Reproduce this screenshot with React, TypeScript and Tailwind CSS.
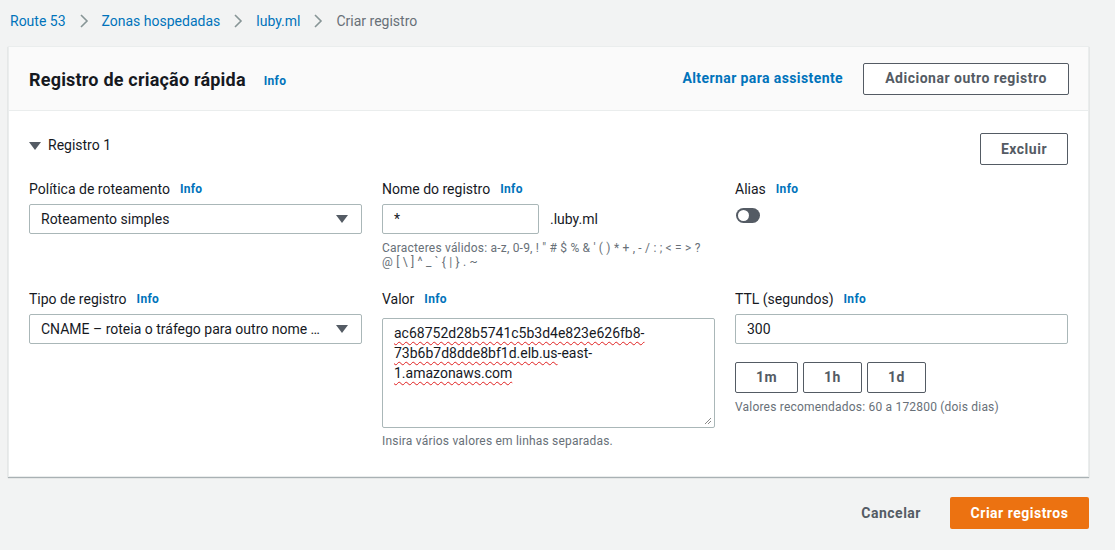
import React from 'react';

const Info = () => (
  <span className="ml-[10px] text-[12px] font-bold tracking-[0.3px] text-[#0073bb]">Info</span>
);

const Caret = () => (
  <svg width="12" height="8" viewBox="0 0 12 8" className="shrink-0">
    <path d="M0 0h12L6 8z" fill="#545b64" />
  </svg>
);

const Chevron = () => (
  <svg width="10" height="14" viewBox="0 0 10 14" className="mx-[13px]">
    <path d="M2 1l6 6-6 6" fill="none" stroke="#879596" strokeWidth="1.6" />
  </svg>
);

const Label = ({ text }: { text: string }) => (
  <div className="flex h-[20px] items-center text-[14px] text-[#16191f]">
    {text}
    <Info />
  </div>
);

const btn = 'rounded-[2px] border border-[#545b64] bg-white text-[14px] font-bold tracking-[0.5px] text-[#545b64]';

const App: React.FC = () => {
  return (
    <div className="min-h-[550px] bg-[#f2f3f3] text-[#16191f]" style={{ fontFamily: 'Roboto, "Noto Sans", sans-serif' }}>
      {/* Breadcrumb */}
      <div className="flex h-[42px] items-center pl-[10px] text-[14px]">
        <span className="text-[#0073bb]">Route 53</span>
        <Chevron />
        <span className="text-[#0073bb]">Zonas hospedadas</span>
        <Chevron />
        <span className="text-[#0073bb]">luby.ml</span>
        <Chevron />
        <span className="text-[#687078]">Criar registro</span>
      </div>

      {/* Card */}
      <div className="ml-[8px] mr-[26px] mt-[4px] border border-[#eaeded] bg-white shadow-[0_1px_1px_0_rgba(0,28,36,0.3)]">
        <div className="flex h-[64px] items-center justify-between border-b border-[#eaeded] bg-[#fafafa] pl-[20px] pr-[19px]">
          <div className="flex items-center pt-[1px]">
            <h1 className="text-[18px] font-bold tracking-[0.2px]">Registro de criação rápida</h1>
            <span className="ml-[18px] mt-[3px] text-[12px] font-bold tracking-[0.3px] text-[#0073bb]">Info</span>
          </div>
          <div className="flex items-center">
            <span className="mr-[20px] text-[14px] font-bold tracking-[0.4px] text-[#0073bb]">Alternar para assistente</span>
            <button className={`h-[32px] w-[206px] ${btn}`}>Adicionar outro registro</button>
          </div>
        </div>

        <div className="px-[20px] pb-[26px] pt-[22px]">
          <div className="flex items-start justify-between">
            <div className="mt-[2px] flex items-center text-[14px]">
              <Caret />
              <span className="ml-[7px]">Registro 1</span>
            </div>
            <button className={`h-[32px] w-[88px] ${btn}`}>Excluir</button>
          </div>

          <div className="mt-[14px] grid grid-cols-3 gap-x-[20px]">
            {/* Row 1 */}
            <div>
              <Label text="Política de roteamento" />
              <div className="mt-[5px] flex h-[30px] items-center justify-between rounded-[2px] border border-[#aab7b8] pl-[11px] pr-[13px] text-[14px]">
                <span>Roteamento simples</span>
                <Caret />
              </div>
            </div>
            <div>
              <Label text="Nome do registro" />
              <div className="mt-[5px] flex items-center">
                <div className="flex h-[30px] w-[157px] items-center rounded-[2px] border border-[#aab7b8] pl-[11px] text-[14px]">*</div>
                <span className="ml-[11px] text-[14px]">.luby.ml</span>
              </div>
              <p className="mt-[7px] text-[12px] leading-[14px] tracking-[0.2px] text-[#687078]">
                Caracteres válidos: a-z, 0-9, ! " # $ % &amp; ' ( ) * + , - / : ; &lt; = &gt; ?
                <br />@ [ \ ] ^ _ ` {'{'} | {'}'} . ~
              </p>
            </div>
            <div>
              <div className="flex h-[20px] items-center text-[14px]">
                Alias
                <Info />
              </div>
              <div className="ml-[1px] mt-[9px] flex h-[15px] w-[24px] items-center rounded-full bg-[#545b64] pl-[2px]">
                <div className="h-[11px] w-[11px] rounded-full bg-white" />
              </div>
            </div>

            {/* Row 2 */}
            <div className="mt-[20px]">
              <Label text="Tipo de registro" />
              <div className="mt-[5px] flex h-[30px] items-center justify-between rounded-[2px] border border-[#aab7b8] pl-[11px] pr-[13px] text-[14px]">
                <span className="truncate pr-[10px]">CNAME – roteia o tráfego para outro nome de domínio</span>
                <Caret />
              </div>
            </div>
            <div className="mt-[20px]">
              <Label text="Valor" />
              <div className="relative mt-[9px] h-[110px] rounded-[2px] border border-[#aab7b8] px-[11px] pt-[4px] text-[14px] leading-[20px]">
                <div className="underline decoration-wavy decoration-[#e02020] decoration-1 underline-offset-[3px]">
                  ac68752d28b5741c5b3d4e823e626fb8-
                </div>
                <div>
                  <span className="underline decoration-wavy decoration-[#e02020] decoration-1 underline-offset-[3px]">73b6b7d8dde8bf1d.elb.us</span>-east-
                </div>
                <div className="underline decoration-wavy decoration-[#e02020] decoration-1 underline-offset-[3px]">1.amazonaws.com</div>
                <svg width="8" height="8" viewBox="0 0 8 8" className="absolute bottom-[2px] right-[2px]">
                  <path d="M7 1L1 7M7 4L4 7" stroke="#888" strokeWidth="1" />
                </svg>
              </div>
              <p className="mt-[4px] text-[12px] tracking-[0.2px] text-[#687078]">Insira vários valores em linhas separadas.</p>
            </div>
            <div className="mt-[20px]">
              <div className="flex h-[20px] items-center text-[14px]">
                TTL (segundos)
                <Info />
              </div>
              <div className="mt-[5px] flex h-[30px] items-center rounded-[2px] border border-[#aab7b8] pl-[11px] text-[14px]">300</div>
              <div className="mt-[18px] flex gap-[5px]">
                <button className={`h-[31px] w-[63px] ${btn}`}>1m</button>
                <button className={`h-[31px] w-[59px] ${btn}`}>1h</button>
                <button className={`h-[31px] w-[59px] ${btn}`}>1d</button>
              </div>
              <p className="mt-[5px] text-[12px] tracking-[0.2px] text-[#687078]">Valores recomendados: 60 a 172800 (dois dias)</p>
            </div>
          </div>
        </div>
      </div>

      {/* Footer */}
      <div className="mr-[26px] mt-[20px] flex items-center justify-end">
        <span className="mr-[29px] text-[14px] font-bold tracking-[0.5px] text-[#545b64]">Cancelar</span>
        <button className="h-[32px] w-[139px] rounded-[2px] bg-[#ec7211] text-[14px] font-bold tracking-[0.5px] text-white">Criar registros</button>
      </div>
    </div>
  );
};

export default App;
